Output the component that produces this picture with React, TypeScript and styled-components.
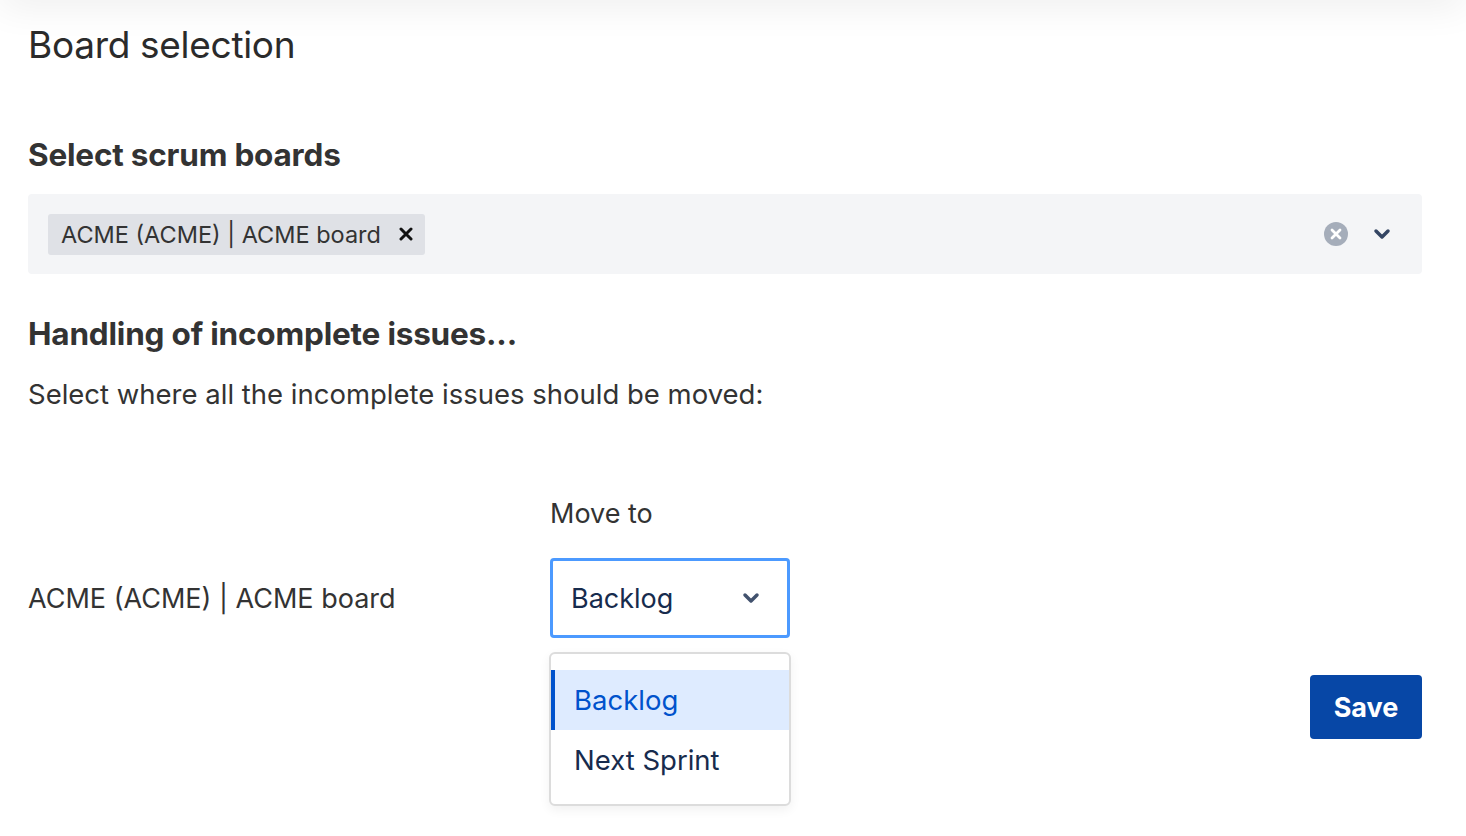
import React from "react";
import styled, { createGlobalStyle } from "styled-components";

const Global = createGlobalStyle`
  html, body { margin: 0; padding: 0; background: #fff; }
  body { font-family: Inter, "Noto Sans", sans-serif; color: #333; }
`;

const Page = styled.div`
  position: relative;
  width: 1466px;
  height: 836px;
  overflow: hidden;
  &::before {
    content: "";
    position: absolute;
    left: 0; right: 0; top: -20px; height: 20px;
    box-shadow: 0 0 40px rgba(0,0,0,0.12);
  }
`;
const Content = styled.div`
  padding: 18px 44px 0 28px;
  display: flex;
  flex-direction: column;
`;
const Title = styled.h1`
  margin: 0;
  font-size: 37px;
  font-weight: 400;
  line-height: 54px;
  color: #2b2b2b;
  letter-spacing: -0.3px;
`;
const H2 = styled.h2<{ $top: number }>`
  margin: ${(p) => p.$top}px 0 0;
  font-size: 31.5px;
  font-weight: 700;
  line-height: 40px;
  color: #333;
  letter-spacing: -0.2px;
`;
const MultiSelect = styled.div`
  margin-top: 19px;
  height: 80px;
  background: #f4f5f7;
  border-radius: 4px;
  display: flex;
  align-items: center;
  padding: 0 30px 0 20px;
`;
const Chip = styled.div`
  display: flex;
  align-items: center;
  gap: 18px;
  height: 41px;
  padding: 0 12px 0 13px;
  background: #dfe1e6;
  border-radius: 3px;
  font-size: 23.5px;
  color: #333;
`;
const Spacer = styled.div`flex: 1;`;
const Indicators = styled.div`
  display: flex;
  align-items: center;
  gap: 24px;
`;
const Para = styled.p`
  margin: 20px 0 0;
  font-size: 27.5px;
  line-height: 40px;
  color: #333;
`;
const Grid = styled.div`
  margin-top: 80px;
  display: grid;
  grid-template-columns: 522px 1fr;
  row-gap: 24px;
`;
const ColLabel = styled.div`
  grid-column: 2;
  font-size: 27px;
  line-height: 40px;
  color: #333;
`;
const RowLabel = styled.div`
  font-size: 27px;
  color: #333;
  align-self: center;
`;
const SelectWrap = styled.div`
  position: relative;
  width: 240px;
`;
const Select = styled.div`
  box-sizing: border-box;
  height: 80px;
  border: 3px solid #4c9aff;
  border-radius: 4px;
  display: flex;
  align-items: center;
  justify-content: space-between;
  padding: 0 26px 0 18px;
  font-size: 27px;
  color: #172b4d;
`;
const Menu = styled.div`
  position: absolute;
  top: 94px;
  left: -1px;
  width: 242px;
  box-sizing: border-box;
  background: #fff;
  border: 2px solid #dcdcdc;
  border-radius: 6px;
  padding: 16px 0 14px;
  box-shadow: 0 4px 11px rgba(0,0,0,0.06);
`;
const Option = styled.div<{ $active?: boolean }>`
  height: 60px;
  display: flex;
  align-items: center;
  padding-left: 23px;
  font-size: 27.5px;
  color: ${(p) => (p.$active ? "#0052cc" : "#172b4d")};
  background: ${(p) => (p.$active ? "#deebff" : "transparent")};
  box-shadow: ${(p) => (p.$active ? "inset 4px 0 0 #0052cc" : "none")};
`;
const Actions = styled.div`
  margin-top: 37px;
  display: flex;
  justify-content: flex-end;
`;
const SaveButton = styled.button`
  width: 112px;
  height: 64px;
  border: none;
  border-radius: 4px;
  background: #0747a6;
  color: #fff;
  font-family: inherit;
  font-size: 27px;
  font-weight: 700;
`;

const Chevron = ({ color = "#42526e" }: { color?: string }) => (
  <svg width="20" height="14" viewBox="0 0 20 14">
    <path d="M4 4l6 6 6-6" fill="none" stroke={color} strokeWidth="3.5" strokeLinecap="round" strokeLinejoin="round" />
  </svg>
);

export default function App() {
  return (
    <Page>
      <Global />
      <Content>
        <Title>Board selection</Title>
        <H2 $top={63}>Select scrum boards</H2>
        <MultiSelect>
          <Chip>
            ACME (ACME) | ACME board
            <svg width="14" height="14" viewBox="0 0 14 14">
              <path d="M2 2l10 10M12 2L2 12" stroke="#111" strokeWidth="3" strokeLinecap="round" />
            </svg>
          </Chip>
          <Spacer />
          <Indicators>
            <svg width="24" height="24" viewBox="0 0 24 24">
              <circle cx="12" cy="12" r="12" fill="#a5adba" />
              <path d="M8 8l8 8M16 8l-8 8" stroke="#fff" strokeWidth="2.8" strokeLinecap="round" />
            </svg>
            <Chevron color="#344563" />
          </Indicators>
        </MultiSelect>
        <H2 $top={40}>Handling of incomplete issues...</H2>
        <Para>Select where all the incomplete issues should be moved:</Para>
        <Grid>
          <ColLabel>Move to</ColLabel>
          <RowLabel>ACME (ACME) | ACME board</RowLabel>
          <SelectWrap>
            <Select>
              Backlog
              <Chevron />
            </Select>
            <Menu>
              <Option $active>Backlog</Option>
              <Option>Next Sprint</Option>
            </Menu>
          </SelectWrap>
        </Grid>
        <Actions>
          <SaveButton>Save</SaveButton>
        </Actions>
      </Content>
    </Page>
  );
}
